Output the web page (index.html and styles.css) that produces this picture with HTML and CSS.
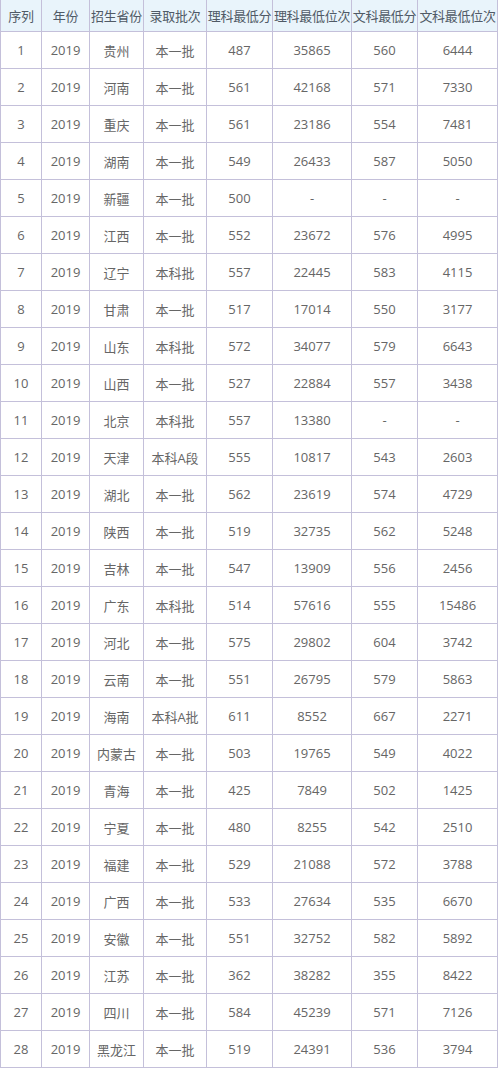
FILE: index.html
```html
<!DOCTYPE html>
<html lang="zh">
<head>
<meta charset="utf-8">
<link rel="stylesheet" href="styles.css">
</head>
<body>
<table class="score">
<colgroup>
<col class="c1"><col class="c2"><col class="c3"><col class="c4"><col class="c5"><col class="c6"><col class="c7"><col class="c8">
</colgroup>
<thead>
<tr><th>序列</th><th>年份</th><th>招生省份</th><th>录取批次</th><th>理科最低分</th><th>理科最低位次</th><th>文科最低分</th><th>文科最低位次</th></tr>
</thead>
<tbody>
<tr><td>1</td><td>2019</td><td>贵州</td><td>本一批</td><td>487</td><td>35865</td><td>560</td><td>6444</td></tr>
<tr><td>2</td><td>2019</td><td>河南</td><td>本一批</td><td>561</td><td>42168</td><td>571</td><td>7330</td></tr>
<tr><td>3</td><td>2019</td><td>重庆</td><td>本一批</td><td>561</td><td>23186</td><td>554</td><td>7481</td></tr>
<tr><td>4</td><td>2019</td><td>湖南</td><td>本一批</td><td>549</td><td>26433</td><td>587</td><td>5050</td></tr>
<tr><td>5</td><td>2019</td><td>新疆</td><td>本一批</td><td>500</td><td>-</td><td>-</td><td>-</td></tr>
<tr><td>6</td><td>2019</td><td>江西</td><td>本一批</td><td>552</td><td>23672</td><td>576</td><td>4995</td></tr>
<tr><td>7</td><td>2019</td><td>辽宁</td><td>本科批</td><td>557</td><td>22445</td><td>583</td><td>4115</td></tr>
<tr><td>8</td><td>2019</td><td>甘肃</td><td>本一批</td><td>517</td><td>17014</td><td>550</td><td>3177</td></tr>
<tr><td>9</td><td>2019</td><td>山东</td><td>本科批</td><td>572</td><td>34077</td><td>579</td><td>6643</td></tr>
<tr><td>10</td><td>2019</td><td>山西</td><td>本一批</td><td>527</td><td>22884</td><td>557</td><td>3438</td></tr>
<tr><td>11</td><td>2019</td><td>北京</td><td>本科批</td><td>557</td><td>13380</td><td>-</td><td>-</td></tr>
<tr><td>12</td><td>2019</td><td>天津</td><td>本科A段</td><td>555</td><td>10817</td><td>543</td><td>2603</td></tr>
<tr><td>13</td><td>2019</td><td>湖北</td><td>本一批</td><td>562</td><td>23619</td><td>574</td><td>4729</td></tr>
<tr><td>14</td><td>2019</td><td>陕西</td><td>本一批</td><td>519</td><td>32735</td><td>562</td><td>5248</td></tr>
<tr><td>15</td><td>2019</td><td>吉林</td><td>本一批</td><td>547</td><td>13909</td><td>556</td><td>2456</td></tr>
<tr><td>16</td><td>2019</td><td>广东</td><td>本科批</td><td>514</td><td>57616</td><td>555</td><td>15486</td></tr>
<tr><td>17</td><td>2019</td><td>河北</td><td>本一批</td><td>575</td><td>29802</td><td>604</td><td>3742</td></tr>
<tr><td>18</td><td>2019</td><td>云南</td><td>本一批</td><td>551</td><td>26795</td><td>579</td><td>5863</td></tr>
<tr><td>19</td><td>2019</td><td>海南</td><td>本科A批</td><td>611</td><td>8552</td><td>667</td><td>2271</td></tr>
<tr><td>20</td><td>2019</td><td>内蒙古</td><td>本一批</td><td>503</td><td>19765</td><td>549</td><td>4022</td></tr>
<tr><td>21</td><td>2019</td><td>青海</td><td>本一批</td><td>425</td><td>7849</td><td>502</td><td>1425</td></tr>
<tr><td>22</td><td>2019</td><td>宁夏</td><td>本一批</td><td>480</td><td>8255</td><td>542</td><td>2510</td></tr>
<tr><td>23</td><td>2019</td><td>福建</td><td>本一批</td><td>529</td><td>21088</td><td>572</td><td>3788</td></tr>
<tr><td>24</td><td>2019</td><td>广西</td><td>本一批</td><td>533</td><td>27634</td><td>535</td><td>6670</td></tr>
<tr><td>25</td><td>2019</td><td>安徽</td><td>本一批</td><td>551</td><td>32752</td><td>582</td><td>5892</td></tr>
<tr><td>26</td><td>2019</td><td>江苏</td><td>本一批</td><td>362</td><td>38282</td><td>355</td><td>8422</td></tr>
<tr><td>27</td><td>2019</td><td>四川</td><td>本一批</td><td>584</td><td>45239</td><td>571</td><td>7126</td></tr>
<tr><td>28</td><td>2019</td><td>黑龙江</td><td>本一批</td><td>519</td><td>24391</td><td>536</td><td>3794</td></tr>
</tbody>
</table>
</body>
</html>
```
FILE: styles.css
```css
html, body {
  margin: 0;
  padding: 0;
  background: #ffffff;
}
body {
  font-family: "Noto Sans CJK SC", "Open Sans", sans-serif;
  color: #666666;
}
.score {
  border-collapse: collapse;
  table-layout: fixed;
  width: 497px;
  margin-left: 0;
}
.c1 { width: 41px; }
.c2 { width: 48px; }
.c3 { width: 54px; }
.c4 { width: 63px; }
.c5 { width: 66px; }
.c6 { width: 79px; }
.c7 { width: 66px; }
.c8 { width: 80px; }
.score th, .score td {
  border: 1px solid #c4c0da;
  padding: 0;
  text-align: center;
  font-size: 13px;
  white-space: nowrap;
  overflow: hidden;
}
.score thead th {
  border-top: none;
  background: #e9f4fb;
  color: #505a66;
  font-weight: normal;
  height: 31px;
  font-size: 13px;
  letter-spacing: -0.3px;
}
.score td {
  height: 36px;
  font-family: "Open Sans", "Noto Sans CJK SC", sans-serif;
}
```
